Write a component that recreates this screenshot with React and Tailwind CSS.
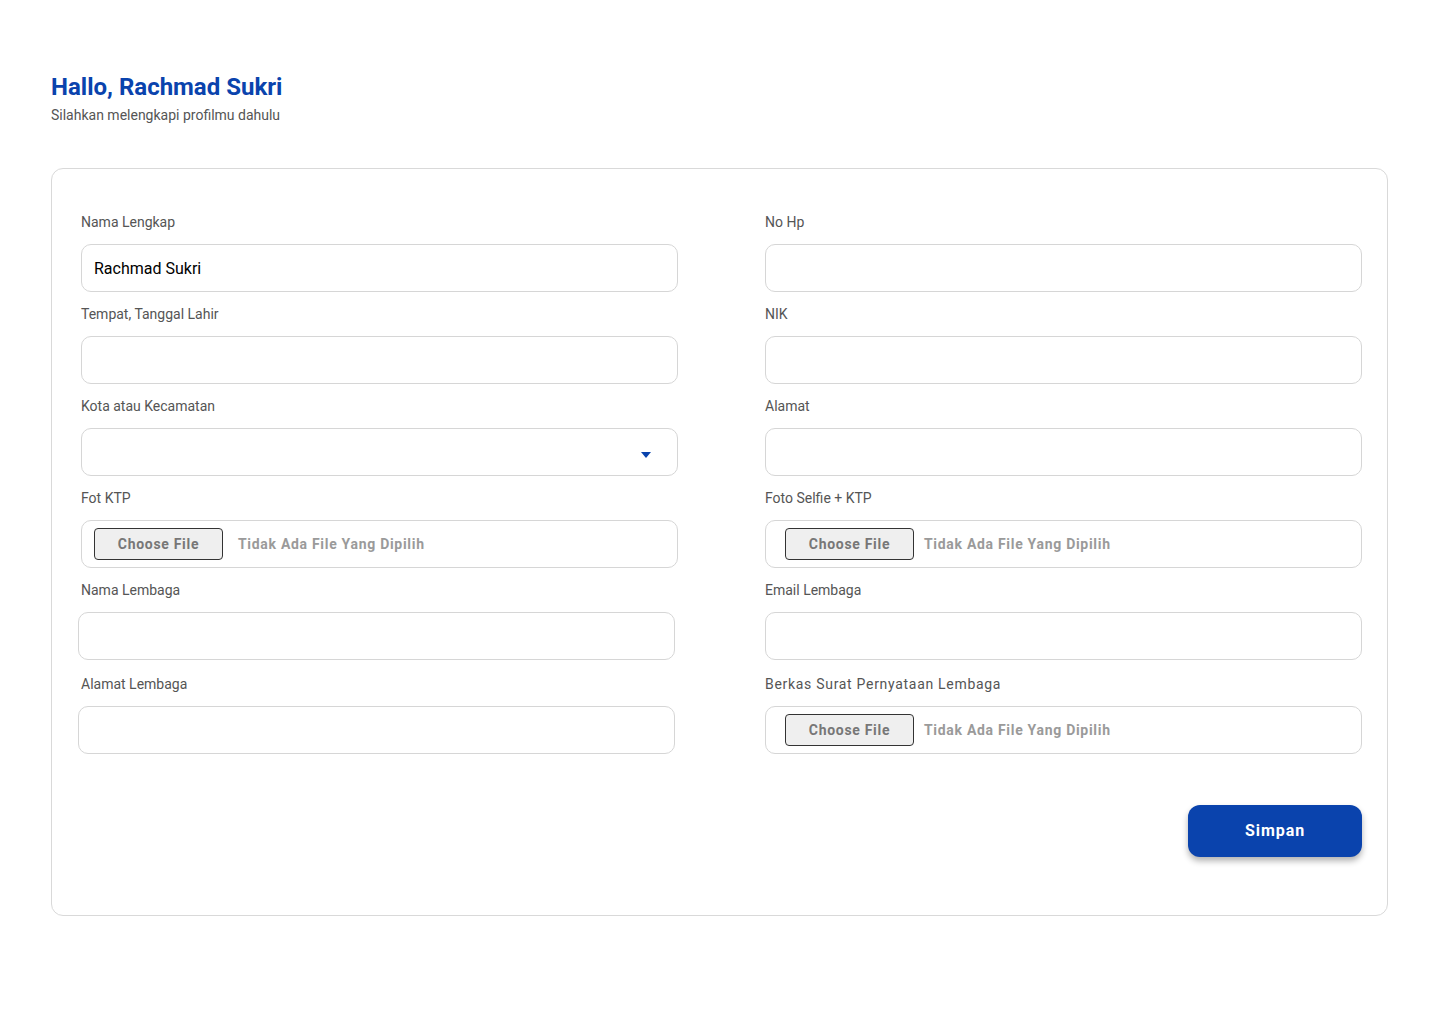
import React from 'react';

const font = { fontFamily: 'Roboto, "Noto Sans", sans-serif' };

function Label({ children, wide }) {
    return (
        <label className={`block h-[18px] leading-[18px] text-sm text-[#555] mb-[13px] ${wide ? 'tracking-[0.05em]' : ''}`}>
            {children}
        </label>
    );
}

function TextField({ label, value, shift }) {
    return (
        <div>
            <Label>{label}</Label>
            <input
                defaultValue={value}
                className={`w-[597px] h-12 rounded-[10px] border border-[#d6d6d6] px-[12px] text-base text-black outline-none ${shift ? '-ml-[3px]' : ''}`}
            />
        </div>
    );
}

function SelectField({ label }) {
    return (
        <div>
            <Label>{label}</Label>
            <div className="w-[597px] h-12 rounded-[10px] border border-[#d6d6d6] flex items-center justify-end pr-[26px]">
                <svg width="10" height="6" viewBox="0 0 10 6" className="mt-[5px]">
                    <path d="M0 0h10L5 6z" fill="#0a43ad" />
                </svg>
            </div>
        </div>
    );
}

function FileField({ label, pad, gap, wide }) {
    return (
        <div>
            <Label wide={wide}>{label}</Label>
            <div className={`w-[597px] h-12 rounded-[10px] border border-[#d6d6d6] flex items-center ${pad}`}>
                <button className="w-[129px] h-8 rounded-[4px] border border-[#333] bg-[#efefef] text-sm font-bold text-[#777] tracking-[0.05em]">
                    Choose File
                </button>
                <span className={`${gap} text-sm font-bold text-[#9a9a9a] tracking-[0.05em]`}>Tidak Ada File Yang Dipilih</span>
            </div>
        </div>
    );
}

export default function App() {
    return (
        <div className="min-h-screen bg-white pl-[51px] pr-[52px] pt-[71px]" style={font}>
            {/* Greeting */}
            <h1 className="text-2xl leading-8 font-bold text-[#0a43ad]">Hallo, Rachmad Sukri</h1>
            <p className="text-sm leading-5 text-[#555] mt-[2px]">Silahkan melengkapi profilmu dahulu</p>

            {/* Form card */}
            <div className="mt-[43px] w-[1337px] rounded-[12px] border border-[#d9d9d9] pt-[44px] pb-[58px] pl-[29px] pr-[25px]">
                <div className="grid grid-cols-[597px_597px] gap-x-[87px] gap-y-[13px]">
                    <TextField label="Nama Lengkap" value="Rachmad Sukri" />
                    <TextField label="No Hp" />
                    <TextField label="Tempat, Tanggal Lahir" />
                    <TextField label="NIK" />
                    <SelectField label="Kota atau Kecamatan" />
                    <TextField label="Alamat" />
                    <FileField label="Fot KTP" pad="pl-[12px]" gap="ml-[15px]" />
                    <FileField label="Foto Selfie + KTP" pad="pl-[19px]" gap="ml-[10px]" />
                    <TextField label="Nama Lembaga" shift />
                    <TextField label="Email Lembaga" />
                    <div className="mt-[2px]">
                        <TextField label="Alamat Lembaga" shift />
                    </div>
                    <div className="mt-[2px]">
                        <FileField label="Berkas Surat Pernyataan Lembaga" pad="pl-[19px]" gap="ml-[10px]" wide />
                    </div>
                </div>

                <div className="flex justify-end mt-[51px]">
                    <button className="w-[174px] h-[52px] rounded-[12px] bg-[#0a43ad] text-white text-base font-bold tracking-[0.06em] shadow-[0_4px_6px_rgba(0,0,0,0.3)]">
                        Simpan
                    </button>
                </div>
            </div>
        </div>
    );
}
